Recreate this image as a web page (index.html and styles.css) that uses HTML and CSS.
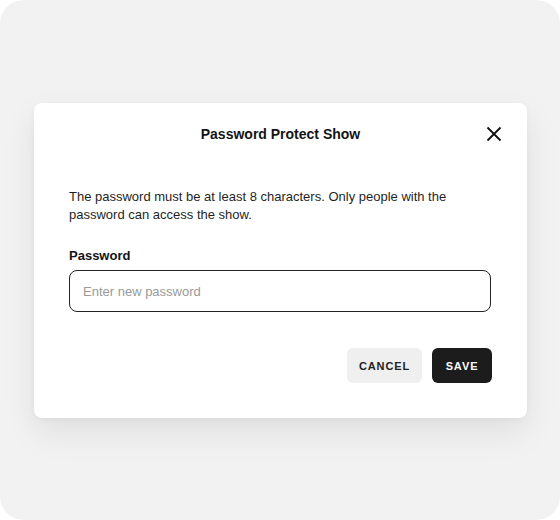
FILE: index.html
```html
<!DOCTYPE html>
<html lang="en">
<head>
<meta charset="utf-8">
<title>Password Protect Show</title>
<link rel="stylesheet" href="styles.css">
</head>
<body>
<div class="frame">
  <div class="dialog">
    <div class="header">
      <span></span>
      <h1 class="title">Password Protect Show</h1>
      <button class="close" aria-label="Close">
        <svg width="16" height="16" viewBox="0 0 16 16"><path d="M1.5 1.5 L14.5 14.5 M14.5 1.5 L1.5 14.5" stroke="#111" stroke-width="1.8" fill="none"/></svg>
      </button>
    </div>
    <p class="desc">The password must be at least 8 characters. Only people with the password can access the show.</p>
    <label class="label" for="pw">Password</label>
    <input class="input" id="pw" type="password" placeholder="Enter new password">
    <div class="actions">
      <button class="btn btn-cancel">CANCEL</button>
      <button class="btn btn-save">SAVE</button>
    </div>
  </div>
</div>
</body>
</html>
```
FILE: styles.css
```css
* { box-sizing: border-box; }
html, body { margin: 0; padding: 0; background: #fff; }
body { font-family: "Liberation Sans", Arial, sans-serif; color: #1a1a1a; }
.frame {
  width: 560px;
  height: 520px;
  background: #f2f2f2;
  border-radius: 24px;
  padding: 103px 0 0 34px;
}
.dialog {
  width: 493px;
  height: 315px;
  background: #fff;
  border-radius: 8px;
  box-shadow: 0 14px 34px rgba(0,0,0,0.08), 0 2px 6px rgba(0,0,0,0.04);
  padding: 0 35px 35px 35px;
  display: flex;
  flex-direction: column;
}
.header {
  height: 62px;
  display: grid;
  grid-template-columns: 1fr auto 1fr;
  align-items: center;
}
.title {
  margin: 0;
  font-size: 14px;
  font-weight: 700;
  letter-spacing: 0;
  color: #141414;
}
.close {
  justify-self: end;
  margin-right: -10px;
  background: none;
  border: 0;
  padding: 0;
  width: 16px;
  height: 16px;
  display: flex;
  cursor: pointer;
}
.desc {
  margin: 23px 0 0 0;
  font-size: 13px;
  line-height: 18px;
  color: #1f1f1f;
}
.label {
  margin-top: 24px;
  font-size: 13px;
  line-height: 16px;
  font-weight: 700;
  color: #141414;
}
.input {
  margin-top: 6px;
  width: 422px;
  height: 42px;
  border: 1px solid #222;
  border-radius: 8px;
  padding: 0 13px;
  font-family: inherit;
  font-size: 13px;
  color: #1a1a1a;
  outline: none;
}
.input::placeholder { color: #9a9a9a; }
.actions {
  margin-top: 36px;
  display: flex;
  justify-content: flex-end;
  gap: 10px;
}
.btn {
  height: 35px;
  border: 0;
  border-radius: 6px;
  font-family: inherit;
  font-size: 11px;
  font-weight: 700;
  letter-spacing: 0.9px;
  cursor: pointer;
}
.btn-cancel {
  width: 75px;
  background: #efefef;
  color: #222;
}
.btn-save {
  width: 60px;
  background: #1c1c1c;
  color: #fff;
}
```
